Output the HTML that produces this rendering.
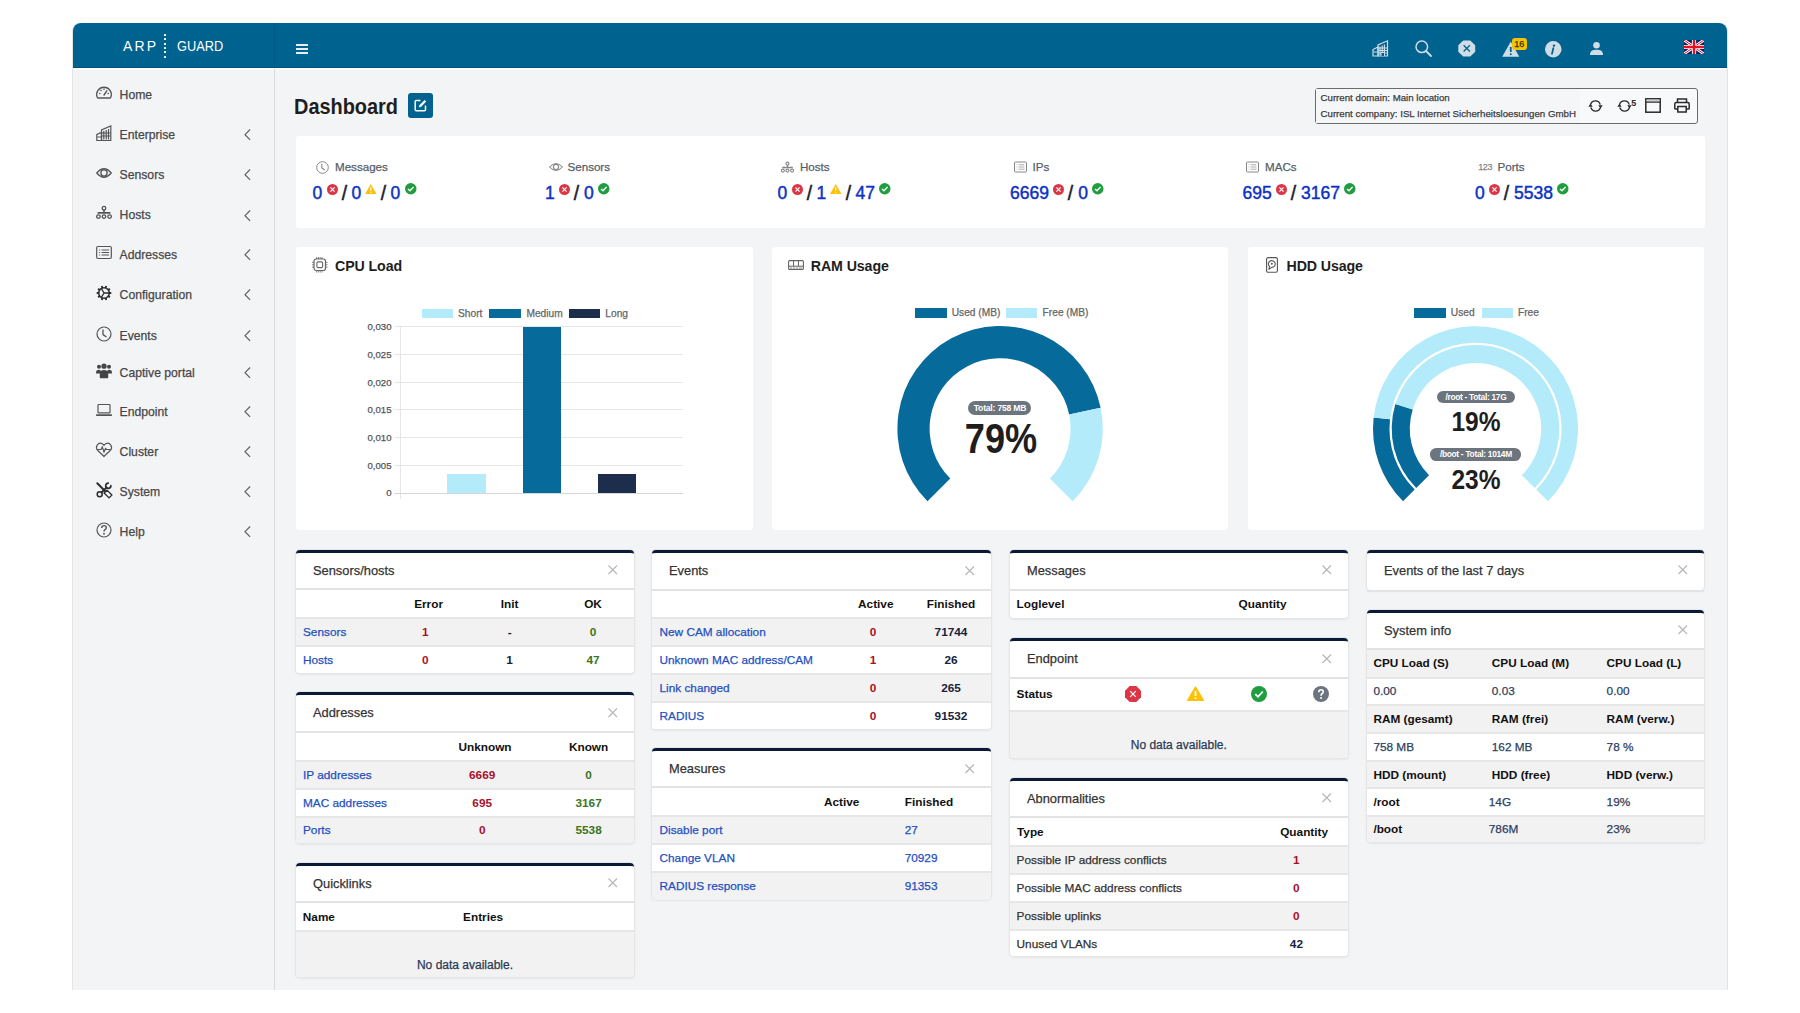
<!DOCTYPE html>
<html><head><meta charset="utf-8"><title>ARP-GUARD Dashboard</title>
<style>
html,body{margin:0;padding:0;background:#fff;width:1800px;height:1013px;overflow:hidden;position:relative;font-family:"Liberation Sans", sans-serif}
.t{position:absolute;white-space:nowrap;font-family:"Liberation Sans", sans-serif;-webkit-text-stroke:0.25px currentColor}
svg{overflow:visible}
</style></head><body>
<div style="position:absolute;left:72px;top:23px;width:1656px;height:967px;background:#f3f4f6;border-left:1px solid #e4e4e4;border-right:1px solid #e2e2e2;box-sizing:border-box;border-radius:8px 8px 0 0"></div><div style="position:absolute;left:73px;top:23px;width:1653.5px;height:45.2px;background:#00628f;border-radius:8px 8px 0 0;border-bottom:1px solid #00507a;box-sizing:border-box"></div><div style="position:absolute;left:73px;top:68.2px;width:1654px;height:1.8px;background:#fbfcfd"></div><div style="position:absolute;left:273.6px;top:23px;width:1px;height:45px;background:rgba(0,0,0,.07)"></div><div style="position:absolute;left:274px;top:68.5px;width:1px;height:921.5px;background:#d9d9d9"></div><div class="t" style="left:123px;top:36.20px;font-size:14px;line-height:20px;font-weight:400;color:#fff;letter-spacing:2.2px;-webkit-text-stroke:0">ARP</div><div style="position:absolute;left:164px;top:33.7px;width:2.2px;height:2.2px;background:#fff;border-radius:.5px"></div><div style="position:absolute;left:164px;top:38.1px;width:2.2px;height:2.2px;background:#fff;border-radius:.5px"></div><div style="position:absolute;left:164px;top:42.5px;width:2.2px;height:2.2px;background:#fff;border-radius:.5px"></div><div style="position:absolute;left:164px;top:46.900000000000006px;width:2.2px;height:2.2px;background:#fff;border-radius:.5px"></div><div style="position:absolute;left:164px;top:51.300000000000004px;width:2.2px;height:2.2px;background:#fff;border-radius:.5px"></div><div style="position:absolute;left:164px;top:55.7px;width:2.2px;height:2.2px;background:#fff;border-radius:.5px"></div><div class="t" style="left:176.5px;top:36.20px;font-size:14px;line-height:20px;font-weight:400;color:#fff;transform:scaleX(0.915);transform-origin:0 0;-webkit-text-stroke:0">GUARD</div><div style="position:absolute;left:296px;top:44.1px;width:11.6px;height:1.6px;background:#e6eef3"></div><div style="position:absolute;left:296px;top:48.1px;width:11.6px;height:1.6px;background:#e6eef3"></div><div style="position:absolute;left:296px;top:52.0px;width:11.6px;height:1.6px;background:#e6eef3"></div><svg style="position:absolute;left:1372px;top:40px;" width="17" height="17" viewBox="0 0 17 17"><g fill="none" stroke="#cfdde6" stroke-width="1.2">
<path d="M1 16V9.5L6 7V16Z"/><path d="M6 16V5L15.5 0.8V16Z"/>
<path d="M8 6.5V15M10.2 5.5V15M12.4 4.5V15M6.5 8H15M6.5 10.5H15M6.5 13H15M1.5 12H5.5"/>
</g><path d="M9 16V12.5H12.5V16" fill="#00628f" stroke="#cfdde6" stroke-width="1"/></svg><svg style="position:absolute;left:1415px;top:40px;" width="17" height="17" viewBox="0 0 17 17"><circle cx="6.8" cy="6.8" r="5.8" fill="none" stroke="#cfdde6" stroke-width="1.5"/><path d="M11 11L16 16" stroke="#cfdde6" stroke-width="1.8" stroke-linecap="round"/></svg><svg style="position:absolute;left:1458px;top:40px;" width="17.5" height="17" viewBox="0 0 17.5 17"><path d="M5.2 0.5H12.3L17.2 5.2V11.8L12.3 16.5H5.2L0.3 11.8V5.2Z" fill="#cfdde6"/><path d="M5.6 5.2L11.9 11.5M11.9 5.2L5.6 11.5" stroke="#00628f" stroke-width="1.3"/></svg><svg style="position:absolute;left:1501.5px;top:40.5px;" width="17.5" height="16" viewBox="0 0 17.5 16"><path d="M8.75 0.5L17.3 15.8H0.2Z" fill="#cfdde6"/><path d="M8.75 6V11" stroke="#00628f" stroke-width="1.8"/><circle cx="8.75" cy="13.2" r="1" fill="#00628f"/></svg><div style="position:absolute;left:1511.5px;top:37.6px;width:15.3px;height:12.6px;background:#f5c400;border-radius:3px"></div><div class="t" style="left:1219.2px;width:600px;text-align:center;top:38.00px;font-size:9px;line-height:12px;font-weight:400;color:#3a2f00;">16</div><svg style="position:absolute;left:1545px;top:40.5px;" width="16.5" height="16.5" viewBox="0 0 16.5 16.5"><circle cx="8.25" cy="8.25" r="8.25" fill="#cfdde6"/><circle cx="9" cy="4.6" r="1.2" fill="#00628f"/><path d="M8.3 7.2L7 12.8" stroke="#00628f" stroke-width="1.7" stroke-linecap="round"/></svg><svg style="position:absolute;left:1590px;top:42.3px;" width="13" height="13" viewBox="0 0 13 13"><circle cx="6.5" cy="3.3" r="3.3" fill="#cfdde6"/><path d="M0 13C0 9 2.5 7.8 6.5 7.8S13 9 13 13Z" fill="#cfdde6"/></svg><svg style="position:absolute;left:1684px;top:40px;overflow:hidden" width="20" height="14" viewBox="0 0 20 14"><rect width="20" height="14" fill="#012169"/>
<path d="M0 0L20 14M20 0L0 14" stroke="#fff" stroke-width="2.8"/>
<path d="M0 0L20 14M20 0L0 14" stroke="#e8101e" stroke-width="1"/>
<path d="M10 0V14M0 7H20" stroke="#fff" stroke-width="4.2"/>
<path d="M10 0V14M0 7H20" stroke="#e8101e" stroke-width="2.4"/></svg><svg style="position:absolute;left:96.0px;top:84.9px;" width="16" height="16" viewBox="0 0 16 16"><path d="M1.2 12.2A7.3 7.3 0 1 1 14.8 12.2Q14.5 13 13.6 13H2.4Q1.5 13 1.2 12.2Z" fill="none" stroke="#555" stroke-width="1.3"/><path d="M8 10L10.8 5.8" stroke="#555" stroke-width="1.4" stroke-linecap="round"/><circle cx="3.8" cy="8.5" r=".8" fill="#555"/><circle cx="5" cy="5.5" r=".8" fill="#555"/><circle cx="8" cy="4.2" r=".8" fill="#555"/><circle cx="12.2" cy="8.5" r=".8" fill="#555"/></svg><div class="t" style="left:119.6px;top:87.00px;font-size:12.2px;line-height:17px;font-weight:400;color:#474747;">Home</div><svg style="position:absolute;left:96.0px;top:124.9px;" width="16" height="16" viewBox="0 0 16 16"><g fill="none" stroke="#555" stroke-width="1.2"><path d="M.8 15.5V9.5L5.5 7.5V15.5Z"/><path d="M5.5 15.5V5L14.8 1V15.5Z"/><path d="M7.8 6V14.5M10.2 5V14.5M12.5 4V14.5M6 8H14.5M6 11H14.5M1.2 12H5"/></g></svg><div class="t" style="left:119.6px;top:127.00px;font-size:12.2px;line-height:17px;font-weight:400;color:#474747;">Enterprise</div><svg style="position:absolute;left:243.5px;top:129.3px;" width="7" height="11" viewBox="0 0 7 11"><path d="M6.1 .5L1 5.7L6.1 10.9" fill="none" stroke="#5e5e5e" stroke-width="1.15"/></svg><svg style="position:absolute;left:96.0px;top:165.0px;" width="16" height="16" viewBox="0 0 16 16"><path d="M.8 8Q8 -.5 15.2 8Q8 16.5 .8 8Z" fill="none" stroke="#555" stroke-width="1.3"/><circle cx="8" cy="8" r="3.1" fill="none" stroke="#555" stroke-width="1.3"/></svg><div class="t" style="left:119.6px;top:167.10px;font-size:12.2px;line-height:17px;font-weight:400;color:#474747;">Sensors</div><svg style="position:absolute;left:243.5px;top:169.4px;" width="7" height="11" viewBox="0 0 7 11"><path d="M6.1 .5L1 5.7L6.1 10.9" fill="none" stroke="#5e5e5e" stroke-width="1.15"/></svg><svg style="position:absolute;left:96.0px;top:205.3px;" width="16" height="16" viewBox="0 0 16 16"><g fill="none" stroke="#555" stroke-width="1.3"><circle cx="8" cy="3.2" r="1.8"/><circle cx="2.4" cy="11.6" r="1.8"/><circle cx="8" cy="11.6" r="1.8"/><circle cx="13.6" cy="11.6" r="1.8"/><path d="M8 5V7.6M1.6 7.9H14.4" stroke-width="1.6"/></g></svg><div class="t" style="left:119.6px;top:207.40px;font-size:12.2px;line-height:17px;font-weight:400;color:#474747;">Hosts</div><svg style="position:absolute;left:243.5px;top:209.70000000000002px;" width="7" height="11" viewBox="0 0 7 11"><path d="M6.1 .5L1 5.7L6.1 10.9" fill="none" stroke="#5e5e5e" stroke-width="1.15"/></svg><svg style="position:absolute;left:96.0px;top:245.0px;" width="16" height="16" viewBox="0 0 16 16"><g fill="none" stroke="#555" stroke-width="1.2"><rect x=".7" y="1.5" width="14.6" height="12" rx="1.2"/><path d="M3.2 5H4.2M5.6 5H13M3.2 7.5H4.2M5.6 7.5H13M3.2 10H4.2M5.6 10H13"/></g></svg><div class="t" style="left:119.6px;top:247.10px;font-size:12.2px;line-height:17px;font-weight:400;color:#474747;">Addresses</div><svg style="position:absolute;left:243.5px;top:249.4px;" width="7" height="11" viewBox="0 0 7 11"><path d="M6.1 .5L1 5.7L6.1 10.9" fill="none" stroke="#5e5e5e" stroke-width="1.15"/></svg><svg style="position:absolute;left:96.0px;top:285.0px;" width="16" height="16" viewBox="0 0 16 16"><g fill="none" stroke="#2e2e2e"><circle cx="8" cy="8" r="5.3" stroke-width="1.6"/><path d="M13.20 8.00L15.30 8.00M12.21 11.06L13.91 12.29M9.61 12.95L10.26 14.94M6.39 12.95L5.74 14.94M3.79 11.06L2.09 12.29M2.80 8.00L0.70 8.00M3.79 4.94L2.09 3.71M6.39 3.05L5.74 1.06M9.61 3.05L10.26 1.06M12.21 4.94L13.91 3.71" stroke-width="1.9"/><path d="M8 8L13 8M8 8L5.4 3.6M8 8L5.4 12.4" stroke-width="1.3"/></g></svg><div class="t" style="left:119.6px;top:287.10px;font-size:12.2px;line-height:17px;font-weight:400;color:#474747;">Configuration</div><svg style="position:absolute;left:243.5px;top:289.4px;" width="7" height="11" viewBox="0 0 7 11"><path d="M6.1 .5L1 5.7L6.1 10.9" fill="none" stroke="#5e5e5e" stroke-width="1.15"/></svg><svg style="position:absolute;left:96.0px;top:325.5px;" width="16" height="16" viewBox="0 0 16 16"><circle cx="8" cy="8" r="7" fill="none" stroke="#555" stroke-width="1.2"/><path d="M7 3.5V8.6L10.5 11" fill="none" stroke="#555" stroke-width="1.3"/></svg><div class="t" style="left:119.6px;top:327.60px;font-size:12.2px;line-height:17px;font-weight:400;color:#474747;">Events</div><svg style="position:absolute;left:243.5px;top:329.9px;" width="7" height="11" viewBox="0 0 7 11"><path d="M6.1 .5L1 5.7L6.1 10.9" fill="none" stroke="#5e5e5e" stroke-width="1.15"/></svg><svg style="position:absolute;left:96.0px;top:362.8px;" width="16" height="16" viewBox="0 0 16 16"><g fill="#444"><circle cx="3" cy="3.8" r="2"/><circle cx="13" cy="3.8" r="2"/><circle cx="8" cy="3.2" r="2.6"/><path d="M0 10Q0 6.8 3 6.8Q4.6 6.8 5 8.3L4.5 10.5H0Z"/><path d="M16 10Q16 6.8 13 6.8Q11.4 6.8 11 8.3L11.5 10.5H16Z"/><path d="M3.8 14.5V11Q3.8 7 8 7Q12.2 7 12.2 11V14.5Q12.2 15.2 11.5 15.2H4.5Q3.8 15.2 3.8 14.5Z"/></g></svg><div class="t" style="left:119.6px;top:364.90px;font-size:12.2px;line-height:17px;font-weight:400;color:#474747;">Captive portal</div><svg style="position:absolute;left:243.5px;top:367.2px;" width="7" height="11" viewBox="0 0 7 11"><path d="M6.1 .5L1 5.7L6.1 10.9" fill="none" stroke="#5e5e5e" stroke-width="1.15"/></svg><svg style="position:absolute;left:96.0px;top:401.6px;" width="16" height="16" viewBox="0 0 16 16"><g fill="none" stroke="#555" stroke-width="1.2"><rect x="2" y="2.5" width="12" height="8.3" rx=".6"/></g><path d="M0 12.2H16V13.2Q16 13.9 15.3 13.9H.7Q0 13.9 0 13.2Z" fill="#555"/></svg><div class="t" style="left:119.6px;top:403.70px;font-size:12.2px;line-height:17px;font-weight:400;color:#474747;">Endpoint</div><svg style="position:absolute;left:243.5px;top:406.0px;" width="7" height="11" viewBox="0 0 7 11"><path d="M6.1 .5L1 5.7L6.1 10.9" fill="none" stroke="#5e5e5e" stroke-width="1.15"/></svg><svg style="position:absolute;left:96.0px;top:441.6px;" width="16" height="16" viewBox="0 0 16 16"><path d="M8 14.5L1.8 8.5Q-.6 5.8 1.2 3Q3.4 .2 6.3 1.8Q7.3 2.4 8 3.3Q8.7 2.4 9.7 1.8Q12.6 .2 14.8 3Q16.6 5.8 14.2 8.5Z" fill="none" stroke="#555" stroke-width="1.2"/><path d="M1.5 7.5H5L6.3 5L8 10L9.5 6.5L10.5 7.5H14.5" fill="none" stroke="#555" stroke-width="1.2"/></svg><div class="t" style="left:119.6px;top:443.70px;font-size:12.2px;line-height:17px;font-weight:400;color:#474747;">Cluster</div><svg style="position:absolute;left:243.5px;top:446.0px;" width="7" height="11" viewBox="0 0 7 11"><path d="M6.1 .5L1 5.7L6.1 10.9" fill="none" stroke="#5e5e5e" stroke-width="1.15"/></svg><svg style="position:absolute;left:96.0px;top:482.0px;" width="16" height="16" viewBox="0 0 16 16"><g fill="none" stroke="#2e2e2e" stroke-linecap="round" stroke-linejoin="round"><path d="M1.3 1.3L9.2 9.2" stroke-width="2"/><path d="M10.94 8.12L8.12 10.94L13.06 15.88L15.88 13.06Z" stroke-width="1.4"/><circle cx="3.7" cy="12.3" r="2.5" stroke-width="1.5"/><path d="M5.5 10.5L10.6 5.4" stroke-width="1.9"/><path d="M14.9 3.7A2.6 2.6 0 1 1 12.3 1.1" stroke-width="1.7"/></g></svg><div class="t" style="left:119.6px;top:484.10px;font-size:12.2px;line-height:17px;font-weight:400;color:#474747;">System</div><svg style="position:absolute;left:243.5px;top:486.4px;" width="7" height="11" viewBox="0 0 7 11"><path d="M6.1 .5L1 5.7L6.1 10.9" fill="none" stroke="#5e5e5e" stroke-width="1.15"/></svg><svg style="position:absolute;left:96.0px;top:521.8px;" width="16" height="16" viewBox="0 0 16 16"><circle cx="8" cy="8" r="7" fill="none" stroke="#555" stroke-width="1.2"/><path d="M5.7 6Q5.7 3.6 8 3.6Q10.3 3.6 10.3 5.7Q10.3 7 8.7 7.8Q8 8.2 8 9.6" fill="none" stroke="#555" stroke-width="1.4"/><circle cx="8" cy="11.8" r=".95" fill="#555"/></svg><div class="t" style="left:119.6px;top:523.90px;font-size:12.2px;line-height:17px;font-weight:400;color:#474747;">Help</div><svg style="position:absolute;left:243.5px;top:526.1999999999999px;" width="7" height="11" viewBox="0 0 7 11"><path d="M6.1 .5L1 5.7L6.1 10.9" fill="none" stroke="#5e5e5e" stroke-width="1.15"/></svg><div class="t" style="left:293.8px;top:90.50px;font-size:22px;line-height:31px;font-weight:700;color:#1e1e1e;-webkit-text-stroke:0;transform:scaleX(.905);transform-origin:0 50%">Dashboard</div><div style="position:absolute;left:407.5px;top:92.5px;width:25.5px;height:25px;background:#00628f;border-radius:3px"></div><svg style="position:absolute;left:413.5px;top:98.5px;" width="13" height="13" viewBox="0 0 13 13"><path d="M6.5 1.5H2.2Q1.2 1.5 1.2 2.5V10.8Q1.2 11.8 2.2 11.8H10.5Q11.5 11.8 11.5 10.8V6.5" fill="none" stroke="#fff" stroke-width="1.5"/><path d="M5 8.2L5.3 6.3L10.6 1L12.2 2.6L6.9 7.9Z" fill="#fff"/></svg><div style="position:absolute;left:1314.5px;top:87.5px;width:383.5px;height:36px;border:1px solid #6b6b6b;border-radius:3px;box-sizing:border-box;background:#f8f9fa"></div><div style="position:absolute;left:1315.5px;top:88.5px;width:264px;height:34px;background:#f5f6f8"></div><div class="t" style="left:1320.5px;top:92.00px;font-size:9.7px;line-height:12px;font-weight:400;color:#3d3d3d;">Current domain: Main location</div><div class="t" style="left:1320.5px;top:108.00px;font-size:9.7px;line-height:12px;font-weight:400;color:#3d3d3d;">Current company: ISL Internet Sicherheitsloesungen GmbH</div><svg style="position:absolute;left:1588px;top:99.8px;" width="15" height="12" viewBox="0 0 15 12"><path d="M2.6 4.4A5 5 0 0 1 12.2 4.6" fill="none" stroke="#2a2a2a" stroke-width="1.4"/><path d="M12.4 7.6A5 5 0 0 1 2.8 7.4" fill="none" stroke="#2a2a2a" stroke-width="1.4"/><path d="M10.3 5.2L14.7 5.2L12.5 8.4Z" fill="#2a2a2a"/><path d="M0.3 6.8L4.7 6.8L2.5 3.6Z" fill="#2a2a2a"/></svg><svg style="position:absolute;left:1617px;top:99.8px;" width="15" height="12" viewBox="0 0 15 12"><path d="M2.6 4.4A5 5 0 0 1 12.2 4.6" fill="none" stroke="#2a2a2a" stroke-width="1.4"/><path d="M12.4 7.6A5 5 0 0 1 2.8 7.4" fill="none" stroke="#2a2a2a" stroke-width="1.4"/><path d="M10.3 5.2L14.7 5.2L12.5 8.4Z" fill="#2a2a2a"/><path d="M0.3 6.8L4.7 6.8L2.5 3.6Z" fill="#2a2a2a"/></svg><div class="t" style="left:1631.3px;top:98.40px;font-size:9px;line-height:10px;font-weight:700;color:#2a2a2a;-webkit-text-stroke:0;">5</div><svg style="position:absolute;left:1645px;top:98px;" width="16" height="15" viewBox="0 0 16 15"><rect x=".8" y=".8" width="14.4" height="13.4" fill="none" stroke="#2a2a2a" stroke-width="1.5"/><path d="M.8 4H15.2" stroke="#2a2a2a" stroke-width="1.5"/><rect x="1.6" y="1.6" width="12.8" height="1.8" fill="#ccc"/></svg><svg style="position:absolute;left:1674px;top:98px;" width="16" height="15" viewBox="0 0 16 15"><path d="M3.5 4.5V1H12.5V4.5" fill="none" stroke="#2a2a2a" stroke-width="1.5"/><path d="M3.5 11H1.5Q.8 11 .8 10.2V6Q.8 4.5 2.3 4.5H13.7Q15.2 4.5 15.2 6V10.2Q15.2 11 14.5 11H12.5" fill="none" stroke="#2a2a2a" stroke-width="1.5"/><rect x="3.8" y="8.5" width="8.4" height="5.5" fill="none" stroke="#2a2a2a" stroke-width="1.5"/></svg><div style="position:absolute;left:295.5px;top:136px;width:1409px;height:91.5px;background:#fff;border-radius:3px"></div><svg style="position:absolute;left:316.0px;top:160.5px;" width="13" height="13" viewBox="0 0 13 13"><circle cx="6.5" cy="6.5" r="5.8" fill="none" stroke="#888" stroke-width="1"/><path d="M5.8 2.8V6.9L8.8 9" fill="none" stroke="#888" stroke-width="1.1"/></svg><div class="t" style="left:335.0px;top:159.40px;font-size:11.6px;line-height:16px;font-weight:400;color:#56606a;">Messages</div><div class="t" style="left:312.5px;top:180px;height:26px;display:flex;align-items:center;font-size:17.5px;line-height:26px;color:#0b32c4;-webkit-text-stroke:0.45px currentColor"><span>0</span><svg style="position:relative;top:-3.8px;margin-left:4.4px" width="11" height="11"><circle cx="5.5" cy="5.5" r="5.5" fill="#dc3545"/><path d="M3.4 3.4L7.6 7.6M7.6 3.4L3.4 7.6" stroke="#fff" stroke-width="1.2"/></svg><span style="color:#1a1a2a;margin:0 5px 0 4px;display:inline-block;transform:scale(1.1,1.2)">/</span><span>0</span><svg style="position:relative;top:-3.8px;margin-left:4px" width="11.5" height="10"><path d="M5.75 0L11.5 10H0Z" fill="#ffc107"/><path d="M5.75 3.2V6.8" stroke="#fff" stroke-width="1.2"/><circle cx="5.75" cy="8.3" r=".65" fill="#fff"/></svg><span style="color:#1a1a2a;margin:0 5px 0 4px;display:inline-block;transform:scale(1.1,1.2)">/</span><span>0</span><svg style="position:relative;top:-3.8px;margin-left:4.4px" width="11.5" height="11.5"><circle cx="5.75" cy="5.75" r="5.75" fill="#1f9d3f"/><path d="M3 5.9L5 7.8L8.6 3.9" fill="none" stroke="#fff" stroke-width="1.4"/></svg></div><svg style="position:absolute;left:548.5px;top:160.5px;" width="13" height="13" viewBox="0 0 13 13"><path d="M.6 6Q7 -1 13.4 6Q7 13 .6 6Z" fill="none" stroke="#888" stroke-width="1.1"/><circle cx="7" cy="6" r="2.6" fill="none" stroke="#888" stroke-width="1.1"/></svg><div class="t" style="left:567.5px;top:159.40px;font-size:11.6px;line-height:16px;font-weight:400;color:#56606a;">Sensors</div><div class="t" style="left:545.0px;top:180px;height:26px;display:flex;align-items:center;font-size:17.5px;line-height:26px;color:#0b32c4;-webkit-text-stroke:0.45px currentColor"><span>1</span><svg style="position:relative;top:-3.8px;margin-left:4.4px" width="11" height="11"><circle cx="5.5" cy="5.5" r="5.5" fill="#dc3545"/><path d="M3.4 3.4L7.6 7.6M7.6 3.4L3.4 7.6" stroke="#fff" stroke-width="1.2"/></svg><span style="color:#1a1a2a;margin:0 5px 0 4px;display:inline-block;transform:scale(1.1,1.2)">/</span><span>0</span><svg style="position:relative;top:-3.8px;margin-left:4.4px" width="11.5" height="11.5"><circle cx="5.75" cy="5.75" r="5.75" fill="#1f9d3f"/><path d="M3 5.9L5 7.8L8.6 3.9" fill="none" stroke="#fff" stroke-width="1.4"/></svg></div><svg style="position:absolute;left:781.0px;top:160.5px;" width="13" height="13" viewBox="0 0 13 13"><g fill="none" stroke="#888" stroke-width="1.1"><circle cx="6.5" cy="2.6" r="1.5"/><circle cx="1.9" cy="9.6" r="1.5"/><circle cx="6.5" cy="9.6" r="1.5"/><circle cx="11.1" cy="9.6" r="1.5"/><path d="M6.5 4.1V6.2M1.2 6.5H11.8" stroke-width="1.3"/></g></svg><div class="t" style="left:800.0px;top:159.40px;font-size:11.6px;line-height:16px;font-weight:400;color:#56606a;">Hosts</div><div class="t" style="left:777.5px;top:180px;height:26px;display:flex;align-items:center;font-size:17.5px;line-height:26px;color:#0b32c4;-webkit-text-stroke:0.45px currentColor"><span>0</span><svg style="position:relative;top:-3.8px;margin-left:4.4px" width="11" height="11"><circle cx="5.5" cy="5.5" r="5.5" fill="#dc3545"/><path d="M3.4 3.4L7.6 7.6M7.6 3.4L3.4 7.6" stroke="#fff" stroke-width="1.2"/></svg><span style="color:#1a1a2a;margin:0 5px 0 4px;display:inline-block;transform:scale(1.1,1.2)">/</span><span>1</span><svg style="position:relative;top:-3.8px;margin-left:4px" width="11.5" height="10"><path d="M5.75 0L11.5 10H0Z" fill="#ffc107"/><path d="M5.75 3.2V6.8" stroke="#fff" stroke-width="1.2"/><circle cx="5.75" cy="8.3" r=".65" fill="#fff"/></svg><span style="color:#1a1a2a;margin:0 5px 0 4px;display:inline-block;transform:scale(1.1,1.2)">/</span><span>47</span><svg style="position:relative;top:-3.8px;margin-left:4.4px" width="11.5" height="11.5"><circle cx="5.75" cy="5.75" r="5.75" fill="#1f9d3f"/><path d="M3 5.9L5 7.8L8.6 3.9" fill="none" stroke="#fff" stroke-width="1.4"/></svg></div><svg style="position:absolute;left:1013.5px;top:160.5px;" width="13" height="13" viewBox="0 0 13 13"><g fill="none" stroke="#888" stroke-width="1"><rect x=".5" y="1" width="12" height="10" rx="1"/><path d="M2.6 3.8H3.4M4.6 3.8H10.4M2.6 6H3.4M4.6 6H10.4M2.6 8.2H3.4M4.6 8.2H10.4" stroke-width=".7"/></g></svg><div class="t" style="left:1032.5px;top:159.40px;font-size:11.6px;line-height:16px;font-weight:400;color:#56606a;">IPs</div><div class="t" style="left:1010.0px;top:180px;height:26px;display:flex;align-items:center;font-size:17.5px;line-height:26px;color:#0b32c4;-webkit-text-stroke:0.45px currentColor"><span>6669</span><svg style="position:relative;top:-3.8px;margin-left:4.4px" width="11" height="11"><circle cx="5.5" cy="5.5" r="5.5" fill="#dc3545"/><path d="M3.4 3.4L7.6 7.6M7.6 3.4L3.4 7.6" stroke="#fff" stroke-width="1.2"/></svg><span style="color:#1a1a2a;margin:0 5px 0 4px;display:inline-block;transform:scale(1.1,1.2)">/</span><span>0</span><svg style="position:relative;top:-3.8px;margin-left:4.4px" width="11.5" height="11.5"><circle cx="5.75" cy="5.75" r="5.75" fill="#1f9d3f"/><path d="M3 5.9L5 7.8L8.6 3.9" fill="none" stroke="#fff" stroke-width="1.4"/></svg></div><svg style="position:absolute;left:1246.0px;top:160.5px;" width="13" height="13" viewBox="0 0 13 13"><g fill="none" stroke="#888" stroke-width="1"><rect x=".5" y="1" width="12" height="10" rx="1"/><path d="M2.6 3.8H3.4M4.6 3.8H10.4M2.6 6H3.4M4.6 6H10.4M2.6 8.2H3.4M4.6 8.2H10.4" stroke-width=".7"/></g></svg><div class="t" style="left:1265.0px;top:159.40px;font-size:11.6px;line-height:16px;font-weight:400;color:#56606a;">MACs</div><div class="t" style="left:1242.5px;top:180px;height:26px;display:flex;align-items:center;font-size:17.5px;line-height:26px;color:#0b32c4;-webkit-text-stroke:0.45px currentColor"><span>695</span><svg style="position:relative;top:-3.8px;margin-left:4.4px" width="11" height="11"><circle cx="5.5" cy="5.5" r="5.5" fill="#dc3545"/><path d="M3.4 3.4L7.6 7.6M7.6 3.4L3.4 7.6" stroke="#fff" stroke-width="1.2"/></svg><span style="color:#1a1a2a;margin:0 5px 0 4px;display:inline-block;transform:scale(1.1,1.2)">/</span><span>3167</span><svg style="position:relative;top:-3.8px;margin-left:4.4px" width="11.5" height="11.5"><circle cx="5.75" cy="5.75" r="5.75" fill="#1f9d3f"/><path d="M3 5.9L5 7.8L8.6 3.9" fill="none" stroke="#fff" stroke-width="1.4"/></svg></div><div class="t" style="left:1478.2px;top:161.50px;font-size:9px;line-height:10px;font-weight:400;color:#888;letter-spacing:-.4px">123</div><div class="t" style="left:1497.5px;top:159.40px;font-size:11.6px;line-height:16px;font-weight:400;color:#56606a;">Ports</div><div class="t" style="left:1475.0px;top:180px;height:26px;display:flex;align-items:center;font-size:17.5px;line-height:26px;color:#0b32c4;-webkit-text-stroke:0.45px currentColor"><span>0</span><svg style="position:relative;top:-3.8px;margin-left:4.4px" width="11" height="11"><circle cx="5.5" cy="5.5" r="5.5" fill="#dc3545"/><path d="M3.4 3.4L7.6 7.6M7.6 3.4L3.4 7.6" stroke="#fff" stroke-width="1.2"/></svg><span style="color:#1a1a2a;margin:0 5px 0 4px;display:inline-block;transform:scale(1.1,1.2)">/</span><span>5538</span><svg style="position:relative;top:-3.8px;margin-left:4.4px" width="11.5" height="11.5"><circle cx="5.75" cy="5.75" r="5.75" fill="#1f9d3f"/><path d="M3 5.9L5 7.8L8.6 3.9" fill="none" stroke="#fff" stroke-width="1.4"/></svg></div><div style="position:absolute;left:296px;top:247px;width:457px;height:283px;background:#fff;border-radius:3px"></div><div style="position:absolute;left:772px;top:247px;width:456px;height:283px;background:#fff;border-radius:3px"></div><div style="position:absolute;left:1248px;top:247px;width:456px;height:283px;background:#fff;border-radius:3px"></div><svg style="position:absolute;left:312.3px;top:257.3px;" width="15.5" height="15.5" viewBox="0 0 15.5 15.5"><g fill="none" stroke="#666"><rect x="2" y="2" width="11.5" height="11.5" rx="2.2" stroke-width="1.2"/><rect x="4.9" y="4.9" width="5.7" height="5.7" rx="1.2" stroke-width="1.1"/><path d="M4.6 0V2M6.4 0V2M8.2 0V2M10 0V2M4.6 13.5V15.5M6.4 13.5V15.5M8.2 13.5V15.5M10 13.5V15.5M0 5.4H2M0 7.8H2M0 10.2H2M13.5 5.4H15.5M13.5 7.8H15.5M13.5 10.2H15.5" stroke-width=".8"/></g></svg><div class="t" style="left:335px;top:256.00px;font-size:14.2px;line-height:20px;font-weight:700;color:#1e1e1e;-webkit-text-stroke:0;letter-spacing:-.1px">CPU Load</div><svg style="position:absolute;left:788px;top:260px;" width="16" height="10" viewBox="0 0 16 10"><g fill="none" stroke="#666"><rect x=".6" y=".6" width="14.8" height="8.8" rx="1" stroke-width="1.1"/><path d="M5.5 .6V6.2M10.5 .6V6.2M.6 6.2H15.4" stroke-width="1"/><path d="M2 7.9H4M5 7.9H7M8 7.9H10M11 7.9H14" stroke-width="1" stroke="#999"/></g></svg><div class="t" style="left:810.8px;top:256.00px;font-size:14.2px;line-height:20px;font-weight:700;color:#1e1e1e;-webkit-text-stroke:0;letter-spacing:-.1px">RAM Usage</div><svg style="position:absolute;left:1266px;top:257px;" width="12" height="16" viewBox="0 0 12 16"><g fill="none" stroke="#555" stroke-width="1.1"><rect x=".6" y=".6" width="10.8" height="14.6" rx="1.5"/><path d="M3.5 9.5A3.4 3.4 0 1 1 5.6 10.4L3 12.4Z" stroke-linejoin="round"/></g><circle cx="5.8" cy="6.8" r="1" fill="#555"/></svg><div class="t" style="left:1286.5px;top:256.00px;font-size:14.2px;line-height:20px;font-weight:700;color:#1e1e1e;-webkit-text-stroke:0;letter-spacing:-.1px">HDD Usage</div><div style="position:absolute;left:421.6px;top:308.8px;width:31.6px;height:9.6px;background:#b3ebfb"></div><div class="t" style="left:458px;top:307.60px;font-size:10.2px;line-height:12px;font-weight:400;color:#666;">Short</div><div style="position:absolute;left:489.3px;top:308.8px;width:32px;height:9.6px;background:#066a9a"></div><div class="t" style="left:526.4px;top:307.60px;font-size:10.2px;line-height:12px;font-weight:400;color:#666;">Medium</div><div style="position:absolute;left:568.5px;top:308.8px;width:31.5px;height:9.6px;background:#1c2e4c"></div><div class="t" style="left:605.3px;top:307.60px;font-size:10.2px;line-height:12px;font-weight:400;color:#666;">Long</div><div style="position:absolute;left:394px;top:326.3px;width:289px;height:1px;background:#e6e6e6"></div><div class="t" style="left:-208.5px;width:600px;text-align:right;top:320.80px;font-size:9.6px;line-height:12px;font-weight:400;color:#555;">0,030</div><div style="position:absolute;left:394px;top:354.0px;width:289px;height:1px;background:#e6e6e6"></div><div class="t" style="left:-208.5px;width:600px;text-align:right;top:348.50px;font-size:9.6px;line-height:12px;font-weight:400;color:#555;">0,025</div><div style="position:absolute;left:394px;top:382.0px;width:289px;height:1px;background:#e6e6e6"></div><div class="t" style="left:-208.5px;width:600px;text-align:right;top:376.50px;font-size:9.6px;line-height:12px;font-weight:400;color:#555;">0,020</div><div style="position:absolute;left:394px;top:409.1px;width:289px;height:1px;background:#e6e6e6"></div><div class="t" style="left:-208.5px;width:600px;text-align:right;top:403.60px;font-size:9.6px;line-height:12px;font-weight:400;color:#555;">0,015</div><div style="position:absolute;left:394px;top:437.1px;width:289px;height:1px;background:#e6e6e6"></div><div class="t" style="left:-208.5px;width:600px;text-align:right;top:431.60px;font-size:9.6px;line-height:12px;font-weight:400;color:#555;">0,010</div><div style="position:absolute;left:394px;top:465.2px;width:289px;height:1px;background:#e6e6e6"></div><div class="t" style="left:-208.5px;width:600px;text-align:right;top:459.70px;font-size:9.6px;line-height:12px;font-weight:400;color:#555;">0,005</div><div style="position:absolute;left:394px;top:492.5px;width:289px;height:1px;background:#e6e6e6"></div><div class="t" style="left:-208.5px;width:600px;text-align:right;top:487.00px;font-size:9.6px;line-height:12px;font-weight:400;color:#555;">0</div><div style="position:absolute;left:400.3px;top:326.8px;width:1px;height:172.6px;background:#e6e6e6"></div><div style="position:absolute;left:394px;top:492.5px;width:289px;height:1px;background:#d6d6d6"></div><div style="position:absolute;left:447.2px;top:474.4px;width:38.5px;height:18.6px;background:#b3ebfb"></div><div style="position:absolute;left:522.5px;top:326.8px;width:38.5px;height:166.2px;background:#066a9a"></div><div style="position:absolute;left:597.7px;top:474.4px;width:38.6px;height:18.6px;background:#1c2e4c"></div><div style="position:absolute;left:914.7px;top:308px;width:32px;height:9.8px;background:#066a9a"></div><div class="t" style="left:951.7px;top:306.90px;font-size:10.2px;line-height:12px;font-weight:400;color:#666;">Used (MB)</div><div style="position:absolute;left:1005.9px;top:308px;width:31.6px;height:9.8px;background:#b3ebfb"></div><div class="t" style="left:1042.6px;top:306.90px;font-size:10.2px;line-height:12px;font-weight:400;color:#666;">Free (MB)</div><svg style="position:absolute;left:0px;top:0px;pointer-events:none" width="1800" height="1013" viewBox="0 0 1800 1013"><path d="M927.48 501.32A102.7 102.7 0 1 1 1100.67 407.87L1069.14 414.40A70.5 70.5 0 1 0 950.25 478.55Z" fill="#066a9a"/><path d="M1100.67 407.87A102.7 102.7 0 0 1 1072.72 501.32L1049.95 478.55A70.5 70.5 0 0 0 1069.14 414.40Z" fill="#b3ebfb"/></svg><div style="position:absolute;left:968.3px;top:400.6px;width:63.2px;height:14.4px;background:#6c757d;border-radius:7.2px"></div><div class="t" style="left:700px;width:600px;text-align:center;top:401.80px;font-size:8.6px;line-height:12px;font-weight:700;color:#fff;-webkit-text-stroke:0;letter-spacing:-.2px">Total: 758 MB</div><div class="t" style="left:701.3px;width:600px;text-align:center;top:414.50px;font-size:42px;line-height:48px;font-weight:700;color:#1e1e1e;-webkit-text-stroke:0;transform:scaleX(.86)">79%</div><div style="position:absolute;left:1413.7px;top:308px;width:32px;height:9.8px;background:#066a9a"></div><div class="t" style="left:1450.8px;top:306.90px;font-size:10.2px;line-height:12px;font-weight:400;color:#666;">Used</div><div style="position:absolute;left:1481.5px;top:308px;width:31.5px;height:9.8px;background:#b3ebfb"></div><div class="t" style="left:1518px;top:306.90px;font-size:10.2px;line-height:12px;font-weight:400;color:#666;">Free</div><svg style="position:absolute;left:0px;top:0px;pointer-events:none" width="1800" height="1013" viewBox="0 0 1800 1013"><path d="M1403.02 501.18A102.5 102.5 0 0 1 1373.62 417.45L1390.02 419.26A86 86 0 0 0 1414.69 489.51Z" fill="#066a9a"/><path d="M1373.62 417.45A102.5 102.5 0 1 1 1547.98 501.18L1536.31 489.51A86 86 0 1 0 1390.02 419.26Z" fill="#b3ebfb"/><path d="M1416.24 487.96A83.8 83.8 0 0 1 1395.40 404.06L1412.70 409.38A65.7 65.7 0 0 0 1429.04 475.16Z" fill="#066a9a"/><path d="M1395.40 404.06A83.8 83.8 0 1 1 1534.76 487.96L1521.96 475.16A65.7 65.7 0 1 0 1412.70 409.38Z" fill="#b3ebfb"/></svg><div style="position:absolute;left:1437.2px;top:390.5px;width:77.4px;height:12px;background:#6c757d;border-radius:6px"></div><div class="t" style="left:1175.9px;width:600px;text-align:center;top:390.50px;font-size:8.4px;line-height:12px;font-weight:700;color:#fff;-webkit-text-stroke:0;letter-spacing:-.3px">/root - Total: 17G</div><div class="t" style="left:1176.4px;width:600px;text-align:center;top:403.60px;font-size:28.5px;line-height:34px;font-weight:700;color:#1e1e1e;-webkit-text-stroke:0;transform:scaleX(.86)">19%</div><div style="position:absolute;left:1430.3px;top:448px;width:91.2px;height:12.6px;background:#6c757d;border-radius:6.3px"></div><div class="t" style="left:1175.9px;width:600px;text-align:center;top:448.30px;font-size:8.4px;line-height:12px;font-weight:700;color:#fff;-webkit-text-stroke:0;letter-spacing:-.3px">/boot - Total: 1014M</div><div class="t" style="left:1176.4px;width:600px;text-align:center;top:461.60px;font-size:28.5px;line-height:34px;font-weight:700;color:#1e1e1e;-webkit-text-stroke:0;transform:scaleX(.86)">23%</div><div style="position:absolute;left:296px;top:549.5px;width:338px;height:123.50px;background:#fff;border-radius:4px;box-sizing:border-box;border-top:3px solid #0c1a3a;box-shadow:0 0 0 1px #e6e6e6,0 1px 3px rgba(0,0,0,.12)"></div><div class="t" style="left:313.2px;top:560.50px;font-size:13.4px;line-height:19px;font-weight:400;color:#333;transform:scaleX(.96);transform-origin:0 50%">Sensors/hosts</div><svg style="position:absolute;left:608.0px;top:564.8px;" width="9.5" height="9.5" viewBox="0 0 9.5 9.5"><path d="M.5 .5L9 9M9 .5L.5 9" stroke="#b5b5b5" stroke-width="1.1"/></svg><div style="position:absolute;left:296px;top:589.5px;width:338px;height:28.0px;background:#fff;"></div><div style="position:absolute;left:296px;top:617.5px;width:338px;height:28.0px;background:#f2f2f2;"></div><div style="position:absolute;left:296px;top:645.5px;width:338px;height:27.5px;background:#fff;border-radius:0 0 4px 4px;"></div><div style="position:absolute;left:296px;top:617.2px;width:338px;height:2px;background:#e6e6e6"></div><div style="position:absolute;left:296px;top:645.2px;width:338px;height:2px;background:#e6e6e6"></div><div class="t" style="left:128.60000000000002px;width:600px;text-align:center;top:596.20px;font-size:11.8px;line-height:17px;font-weight:700;color:#111;-webkit-text-stroke:0;">Error</div><div class="t" style="left:209.60000000000002px;width:600px;text-align:center;top:596.20px;font-size:11.8px;line-height:17px;font-weight:700;color:#111;-webkit-text-stroke:0;">Init</div><div class="t" style="left:293px;width:600px;text-align:center;top:596.20px;font-size:11.8px;line-height:17px;font-weight:700;color:#111;-webkit-text-stroke:0;">OK</div><div class="t" style="left:303px;top:624.20px;font-size:11.8px;line-height:17px;font-weight:400;color:#1f50c0;">Sensors</div><div class="t" style="left:125.19999999999999px;width:600px;text-align:center;top:624.20px;font-size:11.8px;line-height:17px;font-weight:700;color:#a8102c;-webkit-text-stroke:0;">1</div><div class="t" style="left:209.60000000000002px;width:600px;text-align:center;top:624.20px;font-size:11.8px;line-height:17px;font-weight:700;color:#17233d;-webkit-text-stroke:0;">-</div><div class="t" style="left:293px;width:600px;text-align:center;top:624.20px;font-size:11.8px;line-height:17px;font-weight:700;color:#3a7521;-webkit-text-stroke:0;">0</div><div class="t" style="left:303px;top:651.95px;font-size:11.8px;line-height:17px;font-weight:400;color:#1f50c0;">Hosts</div><div class="t" style="left:125.19999999999999px;width:600px;text-align:center;top:651.95px;font-size:11.8px;line-height:17px;font-weight:700;color:#a8102c;-webkit-text-stroke:0;">0</div><div class="t" style="left:209.60000000000002px;width:600px;text-align:center;top:651.95px;font-size:11.8px;line-height:17px;font-weight:700;color:#17233d;-webkit-text-stroke:0;">1</div><div class="t" style="left:293px;width:600px;text-align:center;top:651.95px;font-size:11.8px;line-height:17px;font-weight:700;color:#3a7521;-webkit-text-stroke:0;">47</div><div style="position:absolute;left:296px;top:692.2px;width:338px;height:151.10px;background:#fff;border-radius:4px;box-sizing:border-box;border-top:3px solid #0c1a3a;box-shadow:0 0 0 1px #e6e6e6,0 1px 3px rgba(0,0,0,.12)"></div><div class="t" style="left:313.2px;top:703.20px;font-size:13.4px;line-height:19px;font-weight:400;color:#333;transform:scaleX(.96);transform-origin:0 50%">Addresses</div><svg style="position:absolute;left:608.0px;top:707.5px;" width="9.5" height="9.5" viewBox="0 0 9.5 9.5"><path d="M.5 .5L9 9M9 .5L.5 9" stroke="#b5b5b5" stroke-width="1.1"/></svg><div style="position:absolute;left:296px;top:731.5px;width:338px;height:29.0px;background:#fff;"></div><div style="position:absolute;left:296px;top:760.5px;width:338px;height:27.700000000000045px;background:#f2f2f2;"></div><div style="position:absolute;left:296px;top:788.2px;width:338px;height:28.0px;background:#fff;"></div><div style="position:absolute;left:296px;top:816.2px;width:338px;height:27.09999999999991px;background:#f2f2f2;border-radius:0 0 4px 4px;"></div><div style="position:absolute;left:296px;top:760.2px;width:338px;height:2px;background:#e6e6e6"></div><div style="position:absolute;left:296px;top:787.9000000000001px;width:338px;height:2px;background:#e6e6e6"></div><div style="position:absolute;left:296px;top:815.9000000000001px;width:338px;height:2px;background:#e6e6e6"></div><div class="t" style="left:185px;width:600px;text-align:center;top:738.70px;font-size:11.8px;line-height:17px;font-weight:700;color:#111;-webkit-text-stroke:0;">Unknown</div><div class="t" style="left:288.6px;width:600px;text-align:center;top:738.70px;font-size:11.8px;line-height:17px;font-weight:700;color:#111;-webkit-text-stroke:0;">Known</div><div class="t" style="left:303px;top:767.05px;font-size:11.8px;line-height:17px;font-weight:400;color:#1f50c0;">IP addresses</div><div class="t" style="left:182.2px;width:600px;text-align:center;top:767.05px;font-size:11.8px;line-height:17px;font-weight:700;color:#a8102c;-webkit-text-stroke:0;">6669</div><div class="t" style="left:288.6px;width:600px;text-align:center;top:767.05px;font-size:11.8px;line-height:17px;font-weight:700;color:#3a7521;-webkit-text-stroke:0;">0</div><div class="t" style="left:303px;top:794.90px;font-size:11.8px;line-height:17px;font-weight:400;color:#1f50c0;">MAC addresses</div><div class="t" style="left:182.2px;width:600px;text-align:center;top:794.90px;font-size:11.8px;line-height:17px;font-weight:700;color:#a8102c;-webkit-text-stroke:0;">695</div><div class="t" style="left:288.6px;width:600px;text-align:center;top:794.90px;font-size:11.8px;line-height:17px;font-weight:700;color:#3a7521;-webkit-text-stroke:0;">3167</div><div class="t" style="left:303px;top:822.45px;font-size:11.8px;line-height:17px;font-weight:400;color:#1f50c0;">Ports</div><div class="t" style="left:182.2px;width:600px;text-align:center;top:822.45px;font-size:11.8px;line-height:17px;font-weight:700;color:#a8102c;-webkit-text-stroke:0;">0</div><div class="t" style="left:288.6px;width:600px;text-align:center;top:822.45px;font-size:11.8px;line-height:17px;font-weight:700;color:#3a7521;-webkit-text-stroke:0;">5538</div><div style="position:absolute;left:296px;top:862.8px;width:338px;height:114.40px;background:#fff;border-radius:4px;box-sizing:border-box;border-top:3px solid #0c1a3a;box-shadow:0 0 0 1px #e6e6e6,0 1px 3px rgba(0,0,0,.12)"></div><div class="t" style="left:313.2px;top:873.80px;font-size:13.4px;line-height:19px;font-weight:400;color:#333;transform:scaleX(.96);transform-origin:0 50%">Quicklinks</div><svg style="position:absolute;left:608.0px;top:878.0999999999999px;" width="9.5" height="9.5" viewBox="0 0 9.5 9.5"><path d="M.5 .5L9 9M9 .5L.5 9" stroke="#b5b5b5" stroke-width="1.1"/></svg><div style="position:absolute;left:296px;top:901.5px;width:338px;height:29.0px;background:#fff;"></div><div style="position:absolute;left:296px;top:930.5px;width:338px;height:46.700000000000045px;background:#f2f2f2;border-radius:0 0 4px 4px;"></div><div style="position:absolute;left:296px;top:930.2px;width:338px;height:2px;background:#e6e6e6"></div><div class="t" style="left:302.8px;top:908.70px;font-size:11.8px;line-height:17px;font-weight:700;color:#111;-webkit-text-stroke:0;">Name</div><div class="t" style="left:463.1px;top:908.70px;font-size:11.8px;line-height:17px;font-weight:700;color:#111;-webkit-text-stroke:0;">Entries</div><div class="t" style="left:165px;width:600px;text-align:center;top:957.00px;font-size:12px;line-height:17px;font-weight:400;color:#2a3a55;">No data available.</div><div style="position:absolute;left:652px;top:550.2px;width:339px;height:178.60px;background:#fff;border-radius:4px;box-sizing:border-box;border-top:3px solid #0c1a3a;box-shadow:0 0 0 1px #e6e6e6,0 1px 3px rgba(0,0,0,.12)"></div><div class="t" style="left:669.2px;top:561.20px;font-size:13.4px;line-height:19px;font-weight:400;color:#333;transform:scaleX(.96);transform-origin:0 50%">Events</div><svg style="position:absolute;left:965.0px;top:565.5px;" width="9.5" height="9.5" viewBox="0 0 9.5 9.5"><path d="M.5 .5L9 9M9 .5L.5 9" stroke="#b5b5b5" stroke-width="1.1"/></svg><div style="position:absolute;left:652px;top:589px;width:339px;height:28.399999999999977px;background:#fff;"></div><div style="position:absolute;left:652px;top:617.4px;width:339px;height:27.899999999999977px;background:#f2f2f2;"></div><div style="position:absolute;left:652px;top:645.3px;width:339px;height:27.800000000000068px;background:#fff;"></div><div style="position:absolute;left:652px;top:673.1px;width:339px;height:27.899999999999977px;background:#f2f2f2;"></div><div style="position:absolute;left:652px;top:701px;width:339px;height:27.799999999999955px;background:#fff;border-radius:0 0 4px 4px;"></div><div style="position:absolute;left:652px;top:617.1px;width:339px;height:2px;background:#e6e6e6"></div><div style="position:absolute;left:652px;top:645.0px;width:339px;height:2px;background:#e6e6e6"></div><div style="position:absolute;left:652px;top:672.8000000000001px;width:339px;height:2px;background:#e6e6e6"></div><div style="position:absolute;left:652px;top:700.7px;width:339px;height:2px;background:#e6e6e6"></div><div class="t" style="left:575.8px;width:600px;text-align:center;top:595.90px;font-size:11.8px;line-height:17px;font-weight:700;color:#111;-webkit-text-stroke:0;">Active</div><div class="t" style="left:651px;width:600px;text-align:center;top:595.90px;font-size:11.8px;line-height:17px;font-weight:700;color:#111;-webkit-text-stroke:0;">Finished</div><div class="t" style="left:659.5px;top:624.05px;font-size:11.8px;line-height:17px;font-weight:400;color:#1f50c0;">New CAM allocation</div><div class="t" style="left:573px;width:600px;text-align:center;top:624.05px;font-size:11.8px;line-height:17px;font-weight:700;color:#a8102c;-webkit-text-stroke:0;">0</div><div class="t" style="left:651px;width:600px;text-align:center;top:624.05px;font-size:11.8px;line-height:17px;font-weight:700;color:#17233d;-webkit-text-stroke:0;">71744</div><div class="t" style="left:659.5px;top:651.90px;font-size:11.8px;line-height:17px;font-weight:400;color:#1f50c0;">Unknown MAC address/CAM</div><div class="t" style="left:573px;width:600px;text-align:center;top:651.90px;font-size:11.8px;line-height:17px;font-weight:700;color:#a8102c;-webkit-text-stroke:0;">1</div><div class="t" style="left:651px;width:600px;text-align:center;top:651.90px;font-size:11.8px;line-height:17px;font-weight:700;color:#17233d;-webkit-text-stroke:0;">26</div><div class="t" style="left:659.5px;top:679.75px;font-size:11.8px;line-height:17px;font-weight:400;color:#1f50c0;">Link changed</div><div class="t" style="left:573px;width:600px;text-align:center;top:679.75px;font-size:11.8px;line-height:17px;font-weight:700;color:#a8102c;-webkit-text-stroke:0;">0</div><div class="t" style="left:651px;width:600px;text-align:center;top:679.75px;font-size:11.8px;line-height:17px;font-weight:700;color:#17233d;-webkit-text-stroke:0;">265</div><div class="t" style="left:659.5px;top:707.60px;font-size:11.8px;line-height:17px;font-weight:400;color:#1f50c0;">RADIUS</div><div class="t" style="left:573px;width:600px;text-align:center;top:707.60px;font-size:11.8px;line-height:17px;font-weight:700;color:#a8102c;-webkit-text-stroke:0;">0</div><div class="t" style="left:651px;width:600px;text-align:center;top:707.60px;font-size:11.8px;line-height:17px;font-weight:700;color:#17233d;-webkit-text-stroke:0;">91532</div><div style="position:absolute;left:652px;top:748.2px;width:339px;height:151.30px;background:#fff;border-radius:4px;box-sizing:border-box;border-top:3px solid #0c1a3a;box-shadow:0 0 0 1px #e6e6e6,0 1px 3px rgba(0,0,0,.12)"></div><div class="t" style="left:669.2px;top:759.20px;font-size:13.4px;line-height:19px;font-weight:400;color:#333;transform:scaleX(.96);transform-origin:0 50%">Measures</div><svg style="position:absolute;left:965.0px;top:763.5px;" width="9.5" height="9.5" viewBox="0 0 9.5 9.5"><path d="M.5 .5L9 9M9 .5L.5 9" stroke="#b5b5b5" stroke-width="1.1"/></svg><div style="position:absolute;left:652px;top:786.5px;width:339px;height:29.200000000000045px;background:#fff;"></div><div style="position:absolute;left:652px;top:815.7px;width:339px;height:27.899999999999977px;background:#f2f2f2;"></div><div style="position:absolute;left:652px;top:843.6px;width:339px;height:27.899999999999977px;background:#fff;"></div><div style="position:absolute;left:652px;top:871.5px;width:339px;height:28.0px;background:#f2f2f2;border-radius:0 0 4px 4px;"></div><div style="position:absolute;left:652px;top:815.4000000000001px;width:339px;height:2px;background:#e6e6e6"></div><div style="position:absolute;left:652px;top:843.3000000000001px;width:339px;height:2px;background:#e6e6e6"></div><div style="position:absolute;left:652px;top:871.2px;width:339px;height:2px;background:#e6e6e6"></div><div class="t" style="left:824px;top:793.80px;font-size:11.8px;line-height:17px;font-weight:700;color:#111;-webkit-text-stroke:0;">Active</div><div class="t" style="left:904.7px;top:793.80px;font-size:11.8px;line-height:17px;font-weight:700;color:#111;-webkit-text-stroke:0;">Finished</div><div class="t" style="left:659.5px;top:822.35px;font-size:11.8px;line-height:17px;font-weight:400;color:#1f50c0;">Disable port</div><div class="t" style="left:904.7px;top:822.35px;font-size:11.8px;line-height:17px;font-weight:400;color:#1f50c0;">27</div><div class="t" style="left:659.5px;top:850.25px;font-size:11.8px;line-height:17px;font-weight:400;color:#1f50c0;">Change VLAN</div><div class="t" style="left:904.7px;top:850.25px;font-size:11.8px;line-height:17px;font-weight:400;color:#1f50c0;">70929</div><div class="t" style="left:659.5px;top:878.20px;font-size:11.8px;line-height:17px;font-weight:400;color:#1f50c0;">RADIUS response</div><div class="t" style="left:904.7px;top:878.20px;font-size:11.8px;line-height:17px;font-weight:400;color:#1f50c0;">91353</div><div style="position:absolute;left:1010px;top:550px;width:338px;height:67.70px;background:#fff;border-radius:4px;box-sizing:border-box;border-top:3px solid #0c1a3a;box-shadow:0 0 0 1px #e6e6e6,0 1px 3px rgba(0,0,0,.12)"></div><div class="t" style="left:1027.2px;top:561.00px;font-size:13.4px;line-height:19px;font-weight:400;color:#333;transform:scaleX(.96);transform-origin:0 50%">Messages</div><svg style="position:absolute;left:1322.0px;top:565.3px;" width="9.5" height="9.5" viewBox="0 0 9.5 9.5"><path d="M.5 .5L9 9M9 .5L.5 9" stroke="#b5b5b5" stroke-width="1.1"/></svg><div style="position:absolute;left:1010px;top:589px;width:338px;height:28.700000000000045px;background:#fff;border-radius:0 0 4px 4px;"></div><div class="t" style="left:1016.6px;top:596.05px;font-size:11.8px;line-height:17px;font-weight:700;color:#111;-webkit-text-stroke:0;">Loglevel</div><div class="t" style="left:1238.6px;top:596.05px;font-size:11.8px;line-height:17px;font-weight:700;color:#111;-webkit-text-stroke:0;">Quantity</div><div style="position:absolute;left:1010px;top:638.3px;width:338px;height:119.60px;background:#fff;border-radius:4px;box-sizing:border-box;border-top:3px solid #0c1a3a;box-shadow:0 0 0 1px #e6e6e6,0 1px 3px rgba(0,0,0,.12)"></div><div class="t" style="left:1027.2px;top:649.30px;font-size:13.4px;line-height:19px;font-weight:400;color:#333;transform:scaleX(.96);transform-origin:0 50%">Endpoint</div><svg style="position:absolute;left:1322.0px;top:653.5999999999999px;" width="9.5" height="9.5" viewBox="0 0 9.5 9.5"><path d="M.5 .5L9 9M9 .5L.5 9" stroke="#b5b5b5" stroke-width="1.1"/></svg><div style="position:absolute;left:1010px;top:676.9px;width:338px;height:32.89999999999998px;background:#fff;"></div><div style="position:absolute;left:1010px;top:709.8px;width:338px;height:48.10000000000002px;background:#f2f2f2;border-radius:0 0 4px 4px;"></div><div style="position:absolute;left:1010px;top:709.5px;width:338px;height:2px;background:#e6e6e6"></div><div class="t" style="left:1016.6px;top:686.05px;font-size:11.8px;line-height:17px;font-weight:700;color:#111;-webkit-text-stroke:0;">Status</div><svg style="position:absolute;left:1125.3px;top:685.8px;" width="16" height="16" viewBox="0 0 16 16"><path d="M4.7 0H11.3L16 4.7V11.3L11.3 16H4.7L0 11.3V4.7Z" fill="#dc3545"/><path d="M5.2 5.2L10.8 10.8M10.8 5.2L5.2 10.8" stroke="#fff" stroke-width="1.2"/></svg><svg style="position:absolute;left:1187.4px;top:685.6px;" width="17" height="15" viewBox="0 0 17 15"><path d="M8.5 1L16.2 14.2H0.8Z" fill="#ffc107" stroke="#ffc107" stroke-width="1.4" stroke-linejoin="round"/><path d="M8.5 5V10" stroke="#fff" stroke-width="1.8"/><circle cx="8.5" cy="12.3" r="1" fill="#fff"/></svg><svg style="position:absolute;left:1250.9px;top:685.8px;" width="16" height="16" viewBox="0 0 16 16"><circle cx="8" cy="8" r="8" fill="#1f9d3f"/><path d="M4.3 8.2L7 10.8L11.8 5.5" fill="none" stroke="#fff" stroke-width="1.8"/></svg><svg style="position:absolute;left:1312.5px;top:685.8px;" width="16" height="16" viewBox="0 0 16 16"><circle cx="8" cy="8" r="8" fill="#6c757d"/><path d="M5.8 6.2Q5.8 3.8 8 3.8Q10.2 3.8 10.2 5.8Q10.2 7 9 7.7Q8 8.3 8 9.8" fill="none" stroke="#fff" stroke-width="1.6"/><circle cx="8" cy="12" r="1" fill="#fff"/></svg><div class="t" style="left:878.8px;width:600px;text-align:center;top:736.70px;font-size:12px;line-height:17px;font-weight:400;color:#2a3a55;">No data available.</div><div style="position:absolute;left:1010px;top:777.6px;width:338px;height:178.80px;background:#fff;border-radius:4px;box-sizing:border-box;border-top:3px solid #0c1a3a;box-shadow:0 0 0 1px #e6e6e6,0 1px 3px rgba(0,0,0,.12)"></div><div class="t" style="left:1027.2px;top:788.60px;font-size:13.4px;line-height:19px;font-weight:400;color:#333;transform:scaleX(.96);transform-origin:0 50%">Abnormalities</div><svg style="position:absolute;left:1322.0px;top:792.9px;" width="9.5" height="9.5" viewBox="0 0 9.5 9.5"><path d="M.5 .5L9 9M9 .5L.5 9" stroke="#b5b5b5" stroke-width="1.1"/></svg><div style="position:absolute;left:1010px;top:816.6px;width:338px;height:28.799999999999955px;background:#fff;"></div><div style="position:absolute;left:1010px;top:845.4px;width:338px;height:28.0px;background:#f2f2f2;"></div><div style="position:absolute;left:1010px;top:873.4px;width:338px;height:28.0px;background:#fff;"></div><div style="position:absolute;left:1010px;top:901.4px;width:338px;height:28.0px;background:#f2f2f2;"></div><div style="position:absolute;left:1010px;top:929.4px;width:338px;height:27.0px;background:#fff;border-radius:0 0 4px 4px;"></div><div style="position:absolute;left:1010px;top:845.1px;width:338px;height:2px;background:#e6e6e6"></div><div style="position:absolute;left:1010px;top:873.1px;width:338px;height:2px;background:#e6e6e6"></div><div style="position:absolute;left:1010px;top:901.1px;width:338px;height:2px;background:#e6e6e6"></div><div style="position:absolute;left:1010px;top:929.1px;width:338px;height:2px;background:#e6e6e6"></div><div class="t" style="left:1017px;top:823.70px;font-size:11.8px;line-height:17px;font-weight:700;color:#111;-webkit-text-stroke:0;">Type</div><div class="t" style="left:1280.2px;top:823.70px;font-size:11.8px;line-height:17px;font-weight:700;color:#111;-webkit-text-stroke:0;">Quantity</div><div class="t" style="left:1016.6px;top:852.10px;font-size:11.8px;line-height:17px;font-weight:400;color:#333;">Possible IP address conflicts</div><div class="t" style="left:996.4000000000001px;width:600px;text-align:center;top:852.10px;font-size:11.8px;line-height:17px;font-weight:700;color:#a8102c;-webkit-text-stroke:0;">1</div><div class="t" style="left:1016.6px;top:880.10px;font-size:11.8px;line-height:17px;font-weight:400;color:#333;">Possible MAC address conflicts</div><div class="t" style="left:996.4000000000001px;width:600px;text-align:center;top:880.10px;font-size:11.8px;line-height:17px;font-weight:700;color:#a8102c;-webkit-text-stroke:0;">0</div><div class="t" style="left:1016.6px;top:908.10px;font-size:11.8px;line-height:17px;font-weight:400;color:#333;">Possible uplinks</div><div class="t" style="left:996.4000000000001px;width:600px;text-align:center;top:908.10px;font-size:11.8px;line-height:17px;font-weight:700;color:#a8102c;-webkit-text-stroke:0;">0</div><div class="t" style="left:1016.6px;top:935.60px;font-size:11.8px;line-height:17px;font-weight:400;color:#333;">Unused VLANs</div><div class="t" style="left:996.4000000000001px;width:600px;text-align:center;top:935.60px;font-size:11.8px;line-height:17px;font-weight:700;color:#17233d;-webkit-text-stroke:0;">42</div><div style="position:absolute;left:1367px;top:550.1px;width:337px;height:39.50px;background:#fff;border-radius:4px;box-sizing:border-box;border-top:3px solid #0c1a3a;box-shadow:0 0 0 1px #e6e6e6,0 1px 3px rgba(0,0,0,.12)"></div><div class="t" style="left:1384.2px;top:561.10px;font-size:13.4px;line-height:19px;font-weight:400;color:#333;transform:scaleX(.96);transform-origin:0 50%">Events of the last 7 days</div><svg style="position:absolute;left:1678.0px;top:565.4px;" width="9.5" height="9.5" viewBox="0 0 9.5 9.5"><path d="M.5 .5L9 9M9 .5L.5 9" stroke="#b5b5b5" stroke-width="1.1"/></svg><div style="position:absolute;left:1367px;top:609.8px;width:337px;height:232.50px;background:#fff;border-radius:4px;box-sizing:border-box;border-top:3px solid #0c1a3a;box-shadow:0 0 0 1px #e6e6e6,0 1px 3px rgba(0,0,0,.12)"></div><div class="t" style="left:1384.2px;top:620.80px;font-size:13.4px;line-height:19px;font-weight:400;color:#333;transform:scaleX(.96);transform-origin:0 50%">System info</div><svg style="position:absolute;left:1678.0px;top:625.0999999999999px;" width="9.5" height="9.5" viewBox="0 0 9.5 9.5"><path d="M.5 .5L9 9M9 .5L.5 9" stroke="#b5b5b5" stroke-width="1.1"/></svg><div style="position:absolute;left:1367px;top:648.5px;width:337px;height:28.399999999999977px;background:#f2f2f2;"></div><div style="position:absolute;left:1367px;top:676.9px;width:337px;height:27.5px;background:#fff;"></div><div style="position:absolute;left:1367px;top:704.4px;width:337px;height:27.800000000000068px;background:#f2f2f2;"></div><div style="position:absolute;left:1367px;top:732.2px;width:337px;height:27.799999999999955px;background:#fff;"></div><div style="position:absolute;left:1367px;top:760.0px;width:337px;height:27.600000000000023px;background:#f2f2f2;"></div><div style="position:absolute;left:1367px;top:787.6px;width:337px;height:27.5px;background:#fff;"></div><div style="position:absolute;left:1367px;top:815.1px;width:337px;height:27.199999999999932px;background:#f2f2f2;border-radius:0 0 4px 4px;"></div><div style="position:absolute;left:1367px;top:676.6px;width:337px;height:2px;background:#e6e6e6"></div><div style="position:absolute;left:1367px;top:704.1px;width:337px;height:2px;background:#e6e6e6"></div><div style="position:absolute;left:1367px;top:731.9000000000001px;width:337px;height:2px;background:#e6e6e6"></div><div style="position:absolute;left:1367px;top:759.7px;width:337px;height:2px;background:#e6e6e6"></div><div style="position:absolute;left:1367px;top:787.3000000000001px;width:337px;height:2px;background:#e6e6e6"></div><div style="position:absolute;left:1367px;top:814.8000000000001px;width:337px;height:2px;background:#e6e6e6"></div><div class="t" style="left:1373.4px;top:655.40px;font-size:11.8px;line-height:17px;font-weight:700;color:#111;-webkit-text-stroke:0;">CPU Load (S)</div><div class="t" style="left:1491.8px;top:655.40px;font-size:11.8px;line-height:17px;font-weight:700;color:#111;-webkit-text-stroke:0;">CPU Load (M)</div><div class="t" style="left:1606.6px;top:655.40px;font-size:11.8px;line-height:17px;font-weight:700;color:#111;-webkit-text-stroke:0;">CPU Load (L)</div><div class="t" style="left:1373.4px;top:683.35px;font-size:11.8px;line-height:17px;font-weight:400;color:#2b3f60;">0.00</div><div class="t" style="left:1491.8px;top:683.35px;font-size:11.8px;line-height:17px;font-weight:400;color:#2b3f60;">0.03</div><div class="t" style="left:1606.6px;top:683.35px;font-size:11.8px;line-height:17px;font-weight:400;color:#2b3f60;">0.00</div><div class="t" style="left:1373.4px;top:711.00px;font-size:11.8px;line-height:17px;font-weight:700;color:#111;-webkit-text-stroke:0;">RAM (gesamt)</div><div class="t" style="left:1491.8px;top:711.00px;font-size:11.8px;line-height:17px;font-weight:700;color:#111;-webkit-text-stroke:0;">RAM (frei)</div><div class="t" style="left:1606.6px;top:711.00px;font-size:11.8px;line-height:17px;font-weight:700;color:#111;-webkit-text-stroke:0;">RAM (verw.)</div><div class="t" style="left:1373.4px;top:738.80px;font-size:11.8px;line-height:17px;font-weight:400;color:#2b3f60;">758 MB</div><div class="t" style="left:1491.8px;top:738.80px;font-size:11.8px;line-height:17px;font-weight:400;color:#2b3f60;">162 MB</div><div class="t" style="left:1606.6px;top:738.80px;font-size:11.8px;line-height:17px;font-weight:400;color:#2b3f60;">78 %</div><div class="t" style="left:1373.4px;top:766.50px;font-size:11.8px;line-height:17px;font-weight:700;color:#111;-webkit-text-stroke:0;">HDD (mount)</div><div class="t" style="left:1491.8px;top:766.50px;font-size:11.8px;line-height:17px;font-weight:700;color:#111;-webkit-text-stroke:0;">HDD (free)</div><div class="t" style="left:1606.6px;top:766.50px;font-size:11.8px;line-height:17px;font-weight:700;color:#111;-webkit-text-stroke:0;">HDD (verw.)</div><div class="t" style="left:1373.4px;top:794.05px;font-size:11.8px;line-height:17px;font-weight:700;color:#111;-webkit-text-stroke:0;">/root</div><div class="t" style="left:1488.8px;top:794.05px;font-size:11.8px;line-height:17px;font-weight:400;color:#2b3f60;">14G</div><div class="t" style="left:1606.6px;top:794.05px;font-size:11.8px;line-height:17px;font-weight:400;color:#2b3f60;">19%</div><div class="t" style="left:1373.4px;top:821.40px;font-size:11.8px;line-height:17px;font-weight:700;color:#111;-webkit-text-stroke:0;">/boot</div><div class="t" style="left:1488.8px;top:821.40px;font-size:11.8px;line-height:17px;font-weight:400;color:#2b3f60;">786M</div><div class="t" style="left:1606.6px;top:821.40px;font-size:11.8px;line-height:17px;font-weight:400;color:#2b3f60;">23%</div><div style="position:absolute;left:296px;top:588.2px;width:338px;height:2px;background:#e3e3e3"></div><div style="position:absolute;left:296px;top:731.2px;width:338px;height:2px;background:#e3e3e3"></div><div style="position:absolute;left:296px;top:901.2px;width:338px;height:2px;background:#e3e3e3"></div><div style="position:absolute;left:652px;top:588.7px;width:339px;height:2px;background:#e3e3e3"></div><div style="position:absolute;left:652px;top:786.2px;width:339px;height:2px;background:#e3e3e3"></div><div style="position:absolute;left:1010px;top:588.7px;width:338px;height:2px;background:#e3e3e3"></div><div style="position:absolute;left:1010px;top:676.6px;width:338px;height:2px;background:#e3e3e3"></div><div style="position:absolute;left:1010px;top:816.3000000000001px;width:338px;height:2px;background:#e3e3e3"></div><div style="position:absolute;left:1367px;top:590.3000000000001px;width:337px;height:2px;background:#e3e3e3"></div><div style="position:absolute;left:1367px;top:648.2px;width:337px;height:2px;background:#e3e3e3"></div>
</body></html>
